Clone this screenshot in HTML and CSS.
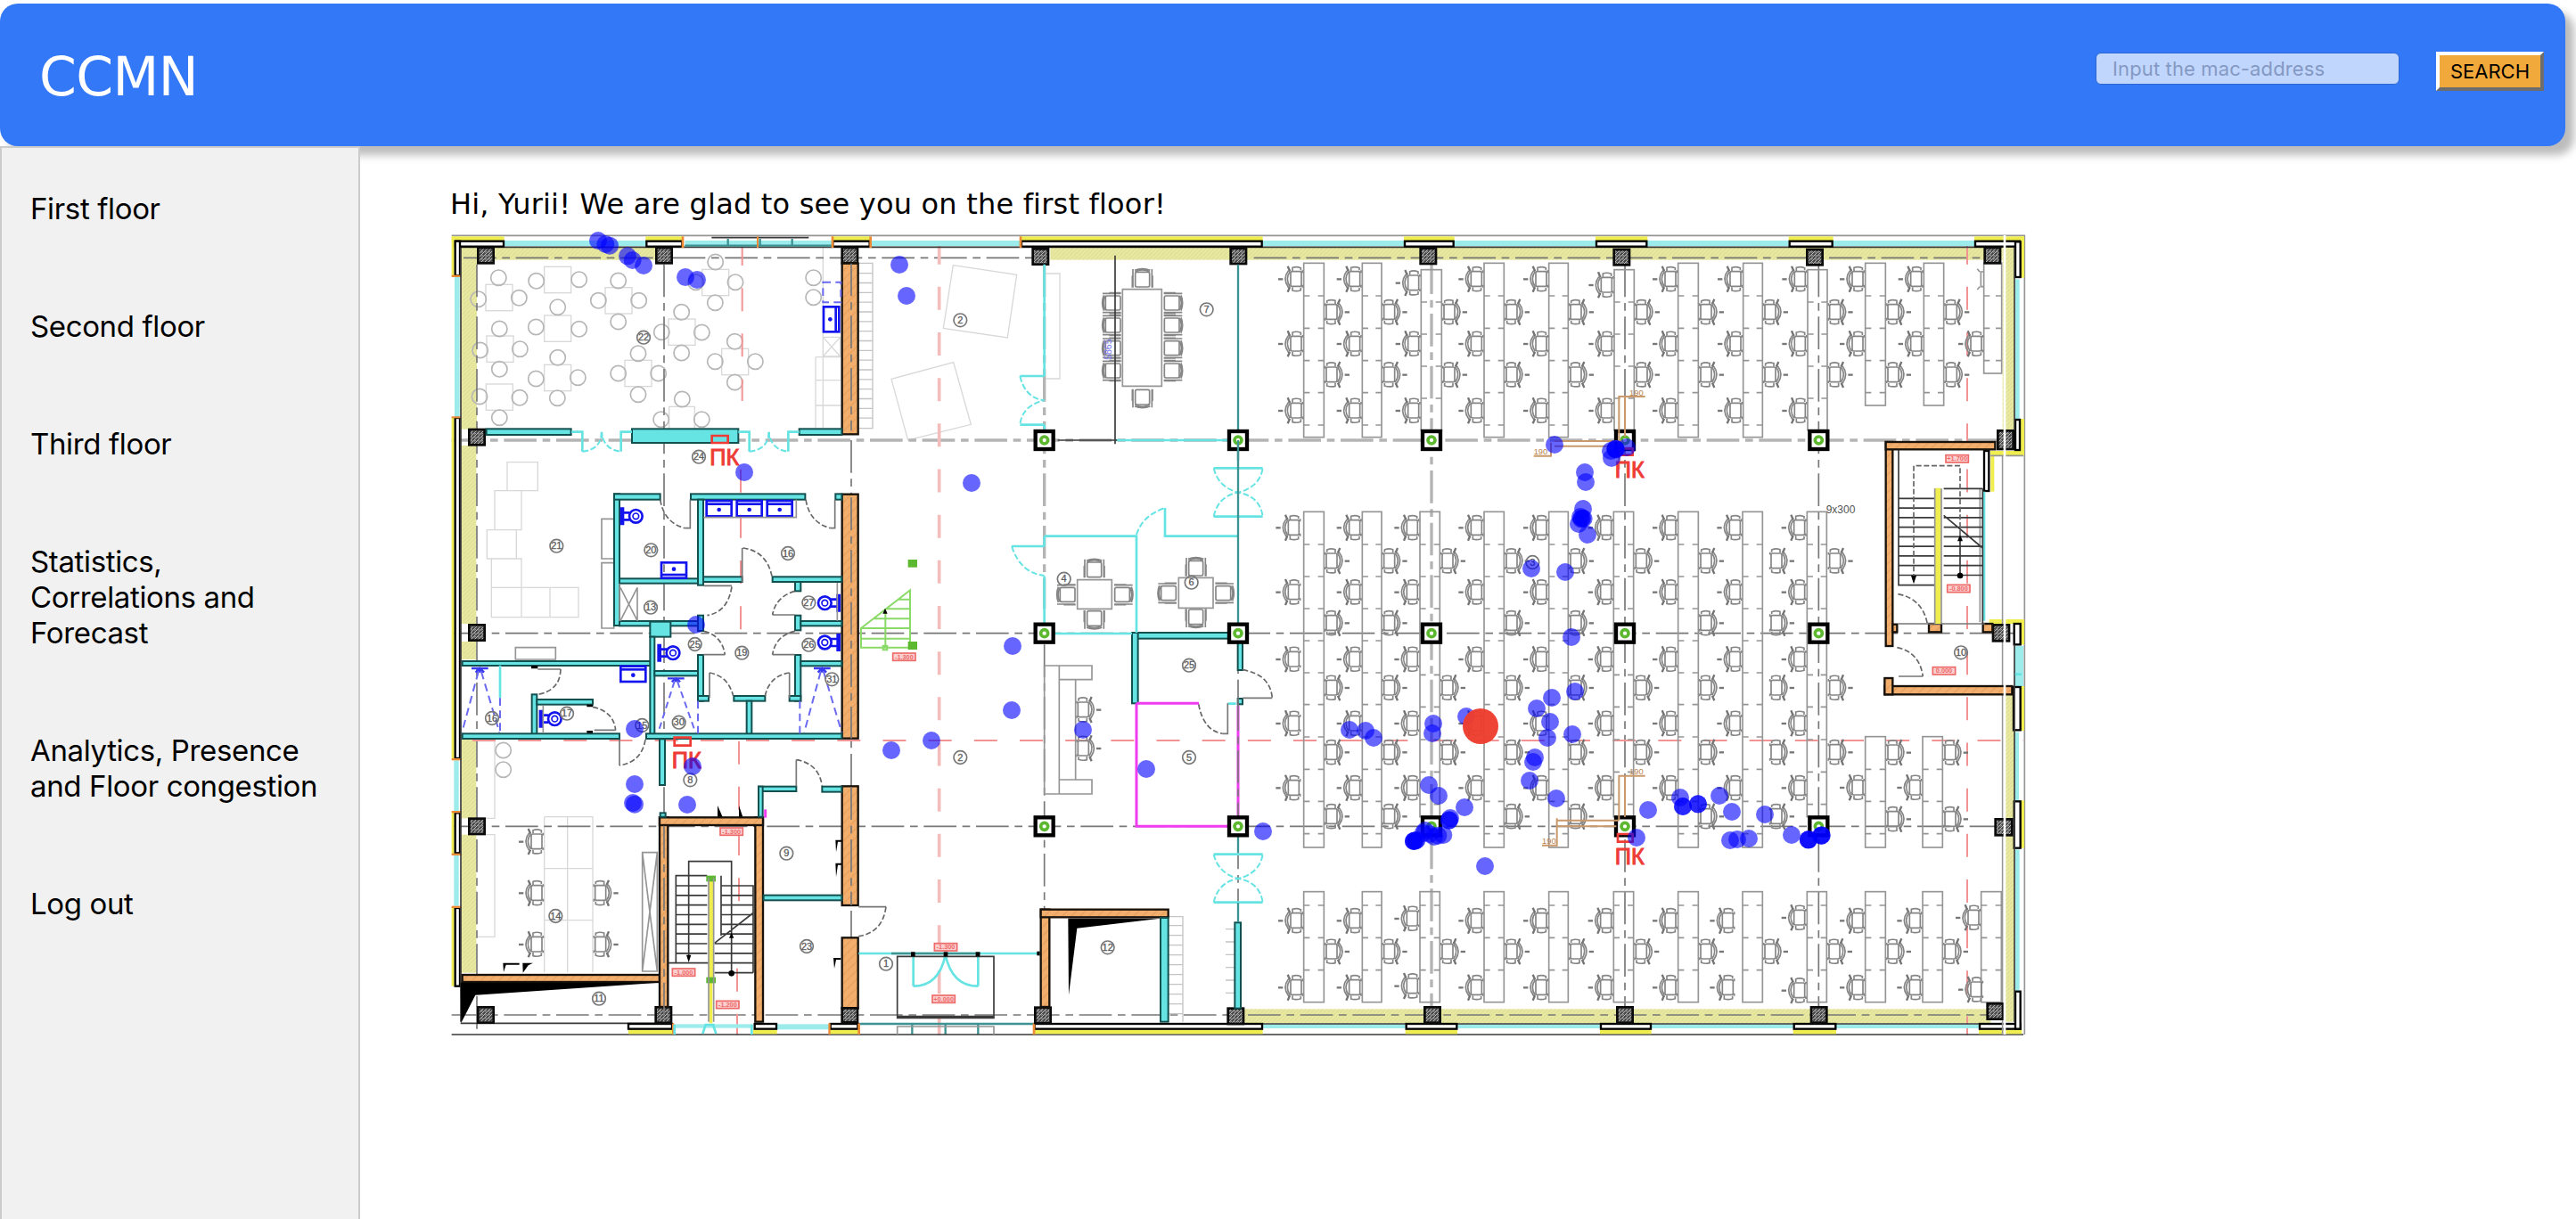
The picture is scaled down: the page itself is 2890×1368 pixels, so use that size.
FILE: index.html
```html
<!DOCTYPE html>
<html lang="en">
<head>
<meta charset="utf-8">
<title>CCMN</title>
<link rel="stylesheet" href="styles.css">
</head>
<body>
<header class="topbar">
  <div class="brand">CCMN</div>
  <form class="search">
    <input class="search-input" type="text" placeholder="Input the mac-address">
    <button class="search-button" type="button">SEARCH</button>
  </form>
</header>
<div class="layout">
  <nav class="sidebar">
    <a class="nav-item">First floor</a>
    <a class="nav-item">Second floor</a>
    <a class="nav-item">Third floor</a>
    <a class="nav-item">Statistics,<br>Correlations and<br>Forecast</a>
    <a class="nav-item">Analytics, Presence<br>and Floor congestion</a>
    <a class="nav-item">Log out</a>
  </nav>
  <main class="content">
    <p class="greeting">Hi, Yurii! We are glad to see you on the first floor!</p>
    <svg class="plan" viewBox="18 42 5298 2694">
      <defs>
        <pattern id="insulation" width="14" height="14" patternUnits="userSpaceOnUse">
          <rect width="14" height="14" fill="#e9e9a6"/>
          <path d="M0 14L14 0" stroke="#dcdc88" stroke-width="3"/>
        </pattern>
        <pattern id="brick" width="30" height="30" patternUnits="userSpaceOnUse">
          <rect width="30" height="30" fill="#f1ae6d"/>
          <path d="M0 30L30 0" stroke="#e8a05f" stroke-width="4"/>
        </pattern>
        <pattern id="concrete" width="12" height="12" patternUnits="userSpaceOnUse">
          <rect width="12" height="12" fill="#4a4a4a"/>
          <path d="M0 12L12 0M0 5L5 0" stroke="#bbb" stroke-width="3"/>
        </pattern>
        <g id="chair" class="chair">
          <rect x="-44" y="-26" width="36" height="50" rx="5"/>
          <path d="M-52 -28Q-72 -2 -52 27L-46 30M-52 -28L-44 -30M-46 -26Q-64 -2 -46 25"/>
          <path d="M-38 -28V-39Q-24 -44 -10 -38V-30M-38 27V38Q-24 42 -10 37V28M-4 -30V-24H-8M-4 28V22H-8"/>
          <path class="arm" d="M-54 -44L-47 -28M-54 43L-47 27"/>
          <path class="knob" d="M-86 0H-70"/>
        </g>
        <g id="seat" class="chair">
          <rect x="-24" y="-22" width="48" height="50" rx="5"/>
          <path d="M-32 30V-32M32 30V-32M-25 -22Q0 -36 25 -22M-26 -28Q0 -38 26 -28M-34 -10V30M34 -10V30"/>
        </g>
        <g id="cafe-table" class="soft">
          <rect x="-45" y="-44" width="90" height="88"/>
        </g>
        <g id="sink" class="fixture">
          <rect x="-42" y="-26" width="84" height="52"/>
          <path d="M-42 -15H42"/>
          <circle class="drain" cy="4" r="7"/>
        </g>
        <g id="toilet" class="fixture">
          <path d="M3 -30V30M9 -30V30M9 -12H32M9 12H32"/>
          <circle cx="52" r="22"/>
          <circle cx="52" r="10" stroke-width="5"/>
        </g>
        <g id="shower" class="shower">
          <path class="head" d="M-28 0H28M-14 14L0 0L14 14M0 0V14"/>
          <path d="M-5 12L-60 215M5 12L66 215"/>
        </g>
      </defs>
      <g id="floor"></g>
      <g id="visitors"></g>
    </svg>
  </main>
</div>
<script src="plan.js"></script>
</body>
</html>
```
FILE: styles.css
```css
* { box-sizing: border-box; }
html, body { height: 100%; }
body {
  margin: 0;
  display: flex;
  flex-direction: column;
  overflow: hidden;
  background: #fff;
  color: #000;
  font-family: "DejaVu Sans", sans-serif;
}
.topbar {
  flex: none;
  display: flex;
  justify-content: space-between;
  height: 160px;
  margin: 4px 12px 0 0;
  padding: 0 24px 0 44px;
  background: #3278f7;
  border-radius: 20px;
  box-shadow: 10px 10px 10px #bcbcbc;
}
.brand {
  color: #fff;
  font-size: 60px;
  line-height: 70px;
  padding-top: 47px;
  letter-spacing: -0.6px;
}
.search { display: flex; align-items: flex-start; gap: 41px; padding-top: 54px; }
.search-input {
  width: 341px;
  height: 36px;
  margin-top: 1px;
  padding: 0 18px;
  border: 1px solid #2b66d2;
  border-radius: 6px;
  background: #c1d6fd;
  font: 22px/30px Inter, sans-serif;
  letter-spacing: 0.13px;
}
.search-input::placeholder { color: #8499c3; opacity: 1; }
.search-button {
  width: 121px;
  height: 44px;
  padding: 0;
  border: 4px solid;
  border-color: #fff #6d6d6d #6d6d6d #fff;
  background: #f2a93b;
  color: #000;
  font: 22px/34px Inter, sans-serif;
}
.layout { flex: 1; display: flex; min-height: 0; }
.sidebar {
  position: relative;
  flex: none;
  display: flex;
  flex-direction: column;
  gap: 92px;
  width: 404px;
  padding: 48px 0 0 32px;
  background: #f1f1f1;
  border: 2px solid #ccc;
  border-bottom: 0;
}
.nav-item { font: 33px/40px Inter, sans-serif; letter-spacing: -0.36px; }
.content { padding: 42px 0 0 102px; }
.greeting {
  margin: 0 0 0 -1px;
  height: 58px;
  font-size: 32px;
  line-height: 46px;
  letter-spacing: 0.2px;
  white-space: nowrap;
}
.plan { display: block; width: 1766px; height: 898px; overflow: visible; }

.plan .chair, .plan .chair path, .plan .chair rect { fill: none; stroke: #858585; stroke-width: 5; }
.plan .chair .arm { stroke: #747474; stroke-width: 7; }
.plan .chair .knob { stroke: #777; stroke-width: 7; }
.plan .desk { fill: none; stroke: #959595; stroke-width: 5; }
.plan .soft { fill: none; stroke: #d8d8d8; stroke-width: 4; }
.plan .rungs { fill: none; stroke: #c4c4c4; stroke-width: 4; }
.plan .stool { fill: none; stroke: #b6b6b6; stroke-width: 5; }
.plan .gray { fill: none; stroke: #959595; stroke-width: 5; }
.plan .dark { fill: none; stroke: #3a3a3a; stroke-width: 5; }
.plan .solid { fill: #000; stroke: none; }
.plan .door { fill: none; stroke: #666; stroke-width: 5; stroke-dasharray: 18 8; }
.plan .leaf { fill: none; stroke: #777; stroke-width: 5; }
.plan .axis { fill: none; stroke: #777; stroke-width: 5; stroke-dasharray: 110 20 26 20; }
.plan .axis.wide { stroke: #b4b4b4; stroke-width: 10; }
.plan .beam { fill: none; stroke: #f29494; stroke-width: 6; stroke-dasharray: 78 75.5; }
.plan .beam.wide { stroke: #f5bcbc; stroke-width: 11; }
.plan .cyan { fill: none; stroke: #66e3e3; stroke-width: 8; }
.plan .cyan.dash { stroke-width: 6; stroke-dasharray: 20 8; }
.plan .glass { fill: #9cecec; }
.plan .teal { fill: none; stroke: #3d9292; stroke-width: 7; }
.plan .partition { fill: #66e4e4; stroke: #12504f; stroke-width: 6; }
.plan .brick { fill: url(#brick); stroke: #17110a; stroke-width: 7; }
.plan .insulation { fill: url(#insulation); }
.plan .concrete { fill: url(#concrete); stroke: #0a0a0a; stroke-width: 8; }
.plan .yellow { fill: #f0ee4e; }
.plan .shell { fill: #fff; stroke: #000; stroke-width: 7; }
.plan .cap { fill: #ec8a35; }
.plan .column { fill: #fff; stroke: #000; stroke-width: 13; }
.plan .core { fill: none; stroke: #5bb82f; stroke-width: 11; }
.plan .fixture, .plan .fixture path { fill: none; stroke: #1414ee; stroke-width: 8; }
.plan .drain { fill: #1414ee; stroke: none; }
.plan .shower { fill: none; stroke: #6a6af0; stroke-width: 6; stroke-dasharray: 26 16; }
.plan .shower .head { stroke-dasharray: none; stroke: #3a3af0; stroke-width: 8; }
.plan .magenta { fill: none; stroke: #f03cf0; stroke-width: 9; }
.plan .green { fill: none; stroke: #8ada68; stroke-width: 6; }
.plan .green-fill { fill: #5bb82f; }
.plan .copper { fill: none; stroke: #c9996b; stroke-width: 6; }
.plan .red { fill: none; stroke: #ee3b35; stroke-width: 8; }
.plan .room circle { fill: none; stroke: #777; stroke-width: 5; }
.plan .room text { font: 33px "Liberation Sans", sans-serif; fill: #444; stroke: #777; stroke-width: 1; text-anchor: middle; }
.plan .pk { font: 76px "Liberation Sans", sans-serif; fill: #ee3b35; stroke: #ee3b35; stroke-width: 3; text-anchor: middle; }
.plan .level rect { fill: #fbd0d0; stroke: #ee6a68; stroke-width: 5; }
.plan .level text { font: bold 22px "Liberation Sans", sans-serif; fill: #ee6a68; text-anchor: middle; }
.plan .size { font: 28px "Liberation Sans", sans-serif; fill: #b98450; }
.plan .note { font: 36px "Liberation Sans", sans-serif; fill: #555; }
.plan .blue-note { font: 32px "Liberation Sans", sans-serif; fill: #7777ee; }
.plan .visitor { fill: rgba(0, 0, 255, 0.6); }
.plan .target { fill: rgba(237, 62, 48, 0.97); }
```
FILE: plan.js
```js
// Draws the first floor; three plan units make one pixel.
const out = [];
const rect = (cls, ...list) => list.forEach(([x1, y1, x2, y2]) =>
  out.push(`<rect class="${cls}" x="${x1}" y="${y1}" width="${x2 - x1}" height="${y2 - y1}"/>`));
const path = (cls, d) => out.push(`<path class="${cls}" d="${d}"/>`);
const circle = (cls, r, ...list) => list.forEach(([x, y]) =>
  out.push(`<circle class="${cls}" cx="${x}" cy="${y}" r="${r}"/>`));
const use = (id, x, y, extra = '') =>
  out.push(`<use href="#${id}" transform="translate(${x} ${y}) ${extra}"/>`);
const text = (cls, x, y, s, extra = '') => out.push(`<text class="${cls}" x="${x}" y="${y}" ${extra}>${s}</text>`);

// insulation
rect('insulation', [52, 83, 705, 125], [2035, 83, 5240, 125], [52, 83, 105, 695], [52, 750, 103, 1350],
  [52, 1410, 103, 1470], [52, 1740, 103, 2005], [52, 2060, 103, 2525], [5240, 83, 5280, 700],
  [5250, 1590, 5280, 2005], [5250, 2065, 5280, 2690], [2685, 2647, 5200, 2695]);

// soft furniture in the lounge
const tables = [[180, 252], [377, 192], [582, 262], [183, 425], [377, 356], [181, 587], [377, 522], [648, 507],
  [795, 368], [908, 201], [974, 468]];
tables.forEach(([x, y]) => use('cafe-table', x, y));
path('soft', 'M752 700V619H838V700M1270 83V690M1245 452H1330M1245 452V690M1245 530H1330M1245 615H1330M1270 385H1328V450H1270ZM1270 385L1328 450M1328 385L1270 450');
path('soft', 'M207 806H310V902H207ZM165 902H255V1034H165ZM139 1034H238V1131H139ZM154 1131H255V1328H154ZM154 1228H447V1328H255M351 1228V1328');
path('soft', 'M332 2000H495V2524M332 2000V2524M410 2000V2524M332 2174H495M332 2348H495M105 1745H165V2005H105M105 2060H165V2404H105');
path('soft', 'M1708 143L1922 175L1891 387L1675 355ZM1500 526L1709 470L1768 679L1556 732ZM2020 171H2067V525H2020');
path('gray', 'M525 997H566V1131H525ZM525 1365V1145H566V1365ZM235 1430H370V1470H235ZM662 2120H712V2520H662ZM662 2120L712 2520M712 2120L662 2520');
circle('stool', 26, [178, 185], [110, 257], [247, 253], [305, 196], [449, 191], [581, 195], [514, 262], [650, 262],
  [581, 333], [181, 357], [116, 429], [250, 425], [181, 493], [377, 284], [304, 351], [449, 358], [377, 454],
  [304, 525], [445, 521], [376, 590], [114, 585], [249, 589], [181, 656], [648, 440], [581, 507], [716, 507],
  [648, 578], [794, 301], [727, 368], [862, 369], [794, 438], [796, 594], [725, 662], [862, 662], [908, 132],
  [842, 200], [975, 200], [907, 269], [973, 400], [907, 467], [1042, 467], [973, 537], [1238, 185], [1238, 251],
  [194, 1776], [194, 1841]);

// grid axes
path('axis wide', 'M20 732H5300M2015 140V1300M3318 130V2640');
path('axis', 'M25 1382H5290M25 2032H5290M20 2667H2680M60 118H1980M2720 118H5200M2700 2667H5190');
path('axis', 'M105 140V2730M735 140V2690M1365 732V2640M2015 1420V2310M2667 130V2730M3969 140V2640M4621 140V2700');
path('beam', 'M998 66V600M993 830V1400M987 1745V2300M981 2510V2735M5121 62V2735M90 1743H5310');
path('beam wide', 'M1661 62V2735');

// desks: x1, x2, top, bottom, divider heights
const desk = (x1, x2, y1, y2, ticks) => {
  rect('desk', [x1, y1, x2, y2]);
  path('desk', ticks.map(t => `M${x1} ${t}h20M${x2} ${t}h-20`).join(''));
};
const topTicks = [246, 355, 464, 572, 681], axisTicks = [267, 375, 483, 591];
[[2888, 2956], [3085, 3150], [3495, 3562], [3713, 3778], [4148, 4216], [4367, 4432]].forEach(([a, b]) => desk(a, b, 136, 722, topTicks));
[[3283, 3352], [3933, 4000], [4584, 4650]].forEach(([a, b]) => desk(a, b, 158, 698, axisTicks));
[[4778, 4846], [4975, 5042]].forEach(([a, b]) => desk(a, b, 136, 615, topTicks.slice(0, 4)));
desk(5177, 5237, 136, 507, topTicks.slice(0, 3));
const midTicks = [1083, 1191, 1299, 1407, 1515, 1622, 1731, 1840, 1948, 2057];
[[2888, 2956], [3085, 3150], [3495, 3562], [3713, 3778], [4148, 4216], [4365, 4432]].forEach(([a, b]) => desk(a, b, 973, 2103, midTicks));
[[3279, 3346], [3931, 3998], [4582, 4648]].forEach(([a, b]) => desk(a, b, 973, 2000, [1083, 1191, 1299, 1522, 1630, 1740, 1849, 1958]));
[[4778, 4846], [4971, 5038]].forEach(([a, b]) => desk(a, b, 1730, 2103, [1840, 1948, 2057]));
[[2888, 2956], [3085, 3150], [3279, 3346], [3495, 3562], [3713, 3778], [3931, 3998], [4148, 4216], [4365, 4432],
  [4582, 4648], [4778, 4846], [4971, 5038], [5168, 5236]].forEach(([a, b]) => desk(a, b, 2252, 2624, [2298, 2407, 2516]));

// chairs on either side of the desks
const left = (x, ...ys) => ys.forEach(y => use('chair', x, y));
const right = (x, ...ys) => ys.forEach(y => use('chair', x, y, 'scale(-1 1)'));
[2888, 3085, 3495, 3713, 4148, 4367, 4584].forEach(x => left(x, 190, 408, 633));
left(3283, 203, 408, 633); left(3933, 210, 408, 633);
left(4778, 190, 408); left(4975, 190, 408); left(5177, 408);
path('gray', 'M5155 155l8 10M5177 165h-10V215h10M5155 225l8-10');
[2956, 3150, 3352, 3562, 3778, 4000, 4216, 4432, 4650, 4846, 5042].forEach(x => right(x, 301, 512));
[2880, 3085, 3279, 3495, 3713, 3931, 4148, 4365, 4582].forEach(x => left(x, 1027, 1244, 1470, 1686, 1903));
[2956, 3150, 3562, 3778, 4216, 4453].forEach(x => right(x, 1139, 1348, 1566, 1783, 1999));
[3346, 3998, 4650].forEach(x => right(x, 1139, 1566, 1783));
left(4778, 1902); left(4971, 1902); right(4846, 1784, 2008); right(5038, 1784, 2008);
[2888, 3085, 3495, 3713, 3931, 4148, 4341, 4778, 4971].forEach(x => left(x, 2350, 2575));
left(3279, 2343, 2570); left(4582, 2340, 2585); left(5168, 2340); left(5177, 2582);
[2956, 3150, 3346, 3562, 3778, 3998, 4216, 4432, 4648, 4846, 5038].forEach(x => right(x, 2454));
left(332, 2084, 2257, 2430); right(495, 2257, 2430);
right(2120, 1640, 1770);

// meeting rooms
path('gray', 'M2278 224H2410V550H2278ZM2126 1202H2242V1300H2126ZM2467 1195H2583V1297H2467Z');
[270, 345, 422, 498].forEach(y => { use('seat', 2243, y, 'rotate(-90)'); use('seat', 2447, y, 'rotate(90)'); });
use('seat', 2345, 188, ''); use('seat', 2345, 590, 'scale(1 -1)');
use('seat', 2183, 1165); use('seat', 2183, 1335, 'scale(1 -1)'); use('seat', 2090, 1252, 'rotate(-90)'); use('seat', 2280, 1252, 'rotate(90)');
use('seat', 2525, 1160); use('seat', 2525, 1330, 'scale(1 -1)'); use('seat', 2430, 1247, 'rotate(-90)'); use('seat', 2620, 1247, 'rotate(90)');
path('gray', 'M2015 1491H2175V1538H2065M2065 1491V1923M2015 1491V1923H2175V1875H2065M2120 1538V1875');

// ladders
let rungs = 'M1390 136H1437V692H1390';
for (let y = 170; y < 680; y += 32.5) rungs += `M1390 ${y}H1437`;
rungs += 'M2433 2336H2481V2690';
for (let y = 2366; y < 2690; y += 33) rungs += `M2433 ${y}H2481`;
for (let y = 2378; y < 2630; y += 43) rungs += `M2625 ${y}H2655`;
path('rungs', rungs);

// facade: top
path('gray', 'M20 43H5314V2733');
rect('glass', [197, 60, 673, 79], [805, 60, 1300, 79], [1430, 60, 1934, 79], [2750, 60, 3225, 79], [3395, 60, 3870, 79],
  [4045, 60, 4520, 79], [4670, 60, 5145, 79]);
path('dark', 'M50 82H5240M895 50H1222');
path('teal', 'M805 77H1300M950 54v20M1058 54v20M1166 54v20');
rect('yellow', [20, 46, 197, 60], [673, 46, 800, 60], [1300, 46, 1430, 60], [1934, 46, 2750, 60], [3225, 46, 3395, 60],
  [3870, 46, 4045, 60], [4520, 46, 4670, 60], [5145, 46, 5313, 60]);
rect('shell', [32, 62, 195, 80], [676, 62, 796, 80], [1303, 62, 1427, 80], [1938, 62, 2747, 80], [3228, 62, 3392, 80],
  [3873, 62, 4042, 80], [4523, 62, 4667, 80], [5148, 62, 5300, 80]);
rect('cap', [794, 46, 802, 84], [1298, 46, 1306, 84], [1426, 46, 1434, 84], [1931, 46, 1939, 84], [1047, 46, 1053, 84]);

// facade: left
rect('glass', [30, 180, 47, 655], [28, 1810, 44, 1980], [28, 2130, 44, 2300]);
rect('yellow', [20, 46, 29, 180], [20, 655, 29, 1805], [20, 1985, 29, 2125], [20, 2305, 29, 2570]);
rect('shell', [32, 62, 48, 178], [32, 657, 48, 1803], [32, 1987, 48, 2122], [32, 2307, 48, 2570]);
rect('cap', [20, 176, 50, 183], [20, 652, 50, 658], [20, 1803, 54, 1810], [20, 1980, 54, 1987], [20, 2123, 54, 2130], [20, 2300, 54, 2307]);
path('dark', 'M51 83V2690');

// facade: bottom
rect('glass', [770, 2698, 1035, 2711], [1115, 2698, 1290, 2716], [2750, 2698, 3230, 2712], [3405, 2698, 3885, 2712], [4058, 2698, 4535, 2712], [4680, 2698, 5160, 2712]);
path('teal', 'M1390 2697H1980M1570 2700V2733M1792 2700V2733M1682 2700V2733');
path('dark', 'M20 2733H5310M50 2695H720M2750 2697H5160');
path('gray', 'M1520 2733V2706H1845V2733');
rect('yellow', [615, 2716, 765, 2731], [1035, 2716, 1115, 2731], [1292, 2716, 1390, 2731], [1980, 2716, 2750, 2731],
  [3230, 2716, 3405, 2731], [3885, 2716, 4058, 2731], [4535, 2716, 4680, 2731], [5160, 2716, 5305, 2731]);
rect('shell', [615, 2697, 762, 2714], [1040, 2697, 1113, 2714], [1295, 2697, 1387, 2714], [1982, 2697, 2748, 2714], [3233, 2697, 3403, 2714],
  [3888, 2697, 4056, 2714], [4538, 2697, 4678, 2714], [5163, 2697, 5300, 2714]);
rect('cap', [762, 2695, 769, 2733], [1288, 2695, 1295, 2733], [1387, 2695, 1395, 2733], [1976, 2695, 1984, 2733]);

// facade: right
rect('glass', [5283, 190, 5297, 660], [5280, 1425, 5310, 1560], [5280, 1715, 5295, 1945], [5283, 2110, 5297, 2585]);
rect('yellow', [5301, 46, 5313, 185], [5301, 660, 5313, 780], [5200, 768, 5313, 783], [5200, 768, 5212, 905], [5195, 1335, 5313, 1350],
  [5301, 1350, 5313, 1420], [5301, 1560, 5313, 1710], [5301, 1945, 5313, 2105]);
rect('shell', [5283, 64, 5300, 183], [5283, 663, 5298, 765], [5178, 768, 5194, 903], [5279, 1350, 5300, 1420], [5277, 1563, 5300, 1708],
  [5279, 1948, 5300, 2105], [5283, 2588, 5300, 2714]);
path('dark', 'M5280 83V700M5280 1420V2690');
path('cyan', 'M5178 905V1340');
path('gray', 'M5164 895V1345M5200 784H5310M5240 784V2733');

// wall columns
[[135, 110], [735, 110], [1360, 110], [2002, 114], [2668, 112], [3307, 112], [3958, 116], [4608, 116], [5206, 110],
  [105, 722], [105, 1380], [105, 2032], [135, 2667], [733, 2667], [2010, 2668], [2659, 2671], [3321, 2667],
  [3969, 2667], [4622, 2667], [5215, 2655]].forEach(([x, y]) => rect('concrete', [x - 26, y - 26, x + 26, y + 26]));
rect('concrete', [5224, 700, 5276, 762], [5208, 1354, 5262, 1408], [5216, 2008, 5272, 2062]);

// brick walls
rect('brick', [1334, 137, 1388, 712], [1334, 914, 1388, 1736], [1334, 1897, 1388, 2298], [1334, 2407, 1388, 2645],
  [56, 2532, 720, 2556], [720, 2002, 748, 2640], [1042, 2002, 1068, 2690], [720, 2002, 1068, 2028],
  [2003, 2312, 2032, 2640], [2003, 2312, 2432, 2338], [4847, 738, 4870, 1425], [4847, 738, 5215, 763],
  [4843, 1560, 5272, 1588], [4843, 1533, 4870, 1588], [4870, 1352, 4885, 1378], [4992, 1350, 5034, 1378], [5174, 1350, 5206, 1378]);
rect('concrete', [1334, 2644, 1386, 2692]);
path('axis', 'M1365 137V700M1365 925V1736M1365 1900V2298M735 2030V2690');
path('solid', 'M50 2558H720L100 2600L52 2694ZM2095 2342H2405L2125 2375L2097 2600Z');
path('solid', 'M915 1962L932 2000H915ZM987 1962L1000 2000H987ZM193 2492h55v6h-45l-8 25zM259 2492h35l-16 8-18 25zM1312 2078h20v6h-12l-6 35zM1312 2156h20v6h-12l-6 40zM1305 2475h25v6h-16l-6 30z');

// partitions
rect('partition', [137, 694, 422, 714], [627, 694, 985, 741], [1190, 694, 1333, 714],
  [567, 913, 585, 1356], [567, 913, 722, 932], [825, 913, 1210, 932], [1312, 913, 1333, 932], [849, 932, 867, 1220],
  [585, 1198, 849, 1214], [867, 1192, 998, 1209], [1100, 1192, 1333, 1209], [1176, 1209, 1195, 1240],
  [585, 1341, 867, 1357], [849, 1322, 867, 1374], [688, 1343, 757, 1394], [1176, 1322, 1195, 1372], [1195, 1341, 1333, 1357],
  [56, 1476, 700, 1491], [688, 1394, 703, 1725], [849, 1455, 867, 1610], [703, 1509, 849, 1525], [1176, 1455, 1195, 1610],
  [1195, 1476, 1333, 1492], [849, 1593, 885, 1610], [970, 1593, 1075, 1610], [1157, 1593, 1195, 1610], [1013, 1610, 1030, 1722],
  [290, 1588, 307, 1722], [307, 1605, 495, 1622], [56, 1720, 585, 1737], [675, 1720, 1333, 1737], [720, 1738, 738, 1893],
  [1053, 1898, 1180, 1914], [1053, 1898, 1067, 2000], [1267, 1898, 1333, 1916], [1070, 2264, 1333, 2281], [722, 1987, 740, 2000],
  [2310, 1380, 2635, 1400], [2310, 1380, 2330, 1618], [2666, 1410, 2682, 1506], [2666, 1602, 2682, 1621],
  [2656, 2356, 2676, 2645], [2406, 2340, 2432, 2690]);
path('solid', 'M288 1491h22v10h-22zM475 1622h20v8h-20zM475 1710h20v8h-20z');
path('cyan', 'M183 1490V1600M2015 140V515M1933 516H2015M1933 680H2015M2015 680V720M2250 732H2640M2015 1055H2325V1380M2421 960V1055H2667M1905 1089H2015M2015 1055V1089M2015 1190V1350M2050 1383H2310M2632 1619H2660M1390 2460H2000M2585 826H2750M2585 989H2750M2585 2126H2750M2585 2288H2750M1574 2465V2570M1792 2465V2570');
path('cyan dash', 'M1933 516Q1950 590 2015 598Q1940 615 1933 680M2325 1050Q2345 985 2421 960M1905 1089Q1935 1180 2015 1188M2585 826Q2600 890 2667 908Q2740 890 2750 826M2585 989Q2600 920 2667 908Q2740 920 2750 989M2585 2126Q2600 2190 2667 2208Q2740 2190 2750 2126M2585 2288Q2600 2220 2667 2208Q2740 2220 2750 2288');
path('cyan', 'M423 704H460V770M627 704H590V770M525 704V725M985 704H1022V770M1190 704H1153V770M1088 704V725');
path('cyan dash', 'M460 770Q520 765 525 710Q535 765 590 770M1022 770Q1082 765 1088 710Q1098 765 1153 770');
path('cyan', 'M1574 2570Q1660 2570 1682 2465Q1705 2570 1792 2570M865 2730l10-30h30M900 2700l10 30M770 2700V2733M1030 2700V2733M5282 1520h22');
path('teal', 'M2667 140V700M2667 760V1350M2667 2050V2120M2667 2290V2355M1500 2460H1800');

// doors
path('leaf', 'M823 932V1028H805M1310 932V1028H1295M998 1210V1095M868 1222H963M1100 1320H1175M868 1454H940M1100 1454H1175M888 1600V1515M1157 1600V1515M310 1503H387M500 1708H572M585 1740V1827M1180 1897V1808M1390 2303H1482M2632 1618V1720H2615M2682 1600H2782M4890 1527H4972M4888 1350H5180');
path('door', 'M722 932Q735 1010 805 1028M1212 932Q1225 1010 1295 1028M1000 1095Q1080 1105 1098 1190M963 1225Q950 1310 880 1322M1175 1240Q1110 1260 1100 1320M870 1375Q930 1390 940 1454M1175 1375Q1110 1390 1100 1454M888 1515Q950 1525 968 1593M1157 1515Q1090 1525 1075 1593M387 1503Q385 1575 310 1588M495 1630Q565 1645 572 1708M672 1740Q660 1815 585 1827M1180 1808Q1255 1820 1267 1895M1482 2303Q1470 2390 1390 2402M2534 1620Q2550 1710 2615 1720M2682 1505Q2775 1520 2782 1600M4885 1430Q4960 1445 4972 1527M4888 1250Q4970 1265 4987 1350');

// plumbing
use('sink', 920, 962); use('sink', 1022, 962); use('sink', 1124, 962); use('sink', 768, 1170, 'scale(1 -1)'); use('sink', 631, 1519);
use('sink', 1298, 325, 'rotate(90)');
use('toilet', 588, 988); use('toilet', 713, 1448); use('toilet', 315, 1670);
use('toilet', 1328, 1280, 'scale(-1 1)'); use('toilet', 1328, 1413, 'scale(-1 1)');
use('shower', 115, 1500); use('shower', 775, 1534, 'scale(1 .85)'); use('shower', 1267, 1500);
path('shower', 'M183 1600V1720M849 1610V1720M1192 1610V1720M1270 200H1330V268H1270Z');
path('gray', 'M868 992H1180V932M585 1215V1340M645 1228V1340M588 1228L645 1340M645 1228L588 1340M328 1625V1718M1318 1212V1340');

// green stair and magenta room
path('green', 'M1398 1365L1563 1237V1430H1398ZM1520 1268H1563M1480 1300H1563M1440 1333H1563M1400 1365H1563M1398 1400H1563M1480 1430V1310M1472 1424h14v14h-14z');
rect('green-fill', [1556, 1134, 1587, 1160], [1556, 1410, 1587, 1437]);
path('solid', 'M1479 1298l-8 18h16z');
path('magenta', 'M2325 1618H2535M2325 1618V2032H2640M2667 1625V2000');
path('axis', 'M2667 1600V2000');
path('magenta', 'M1076 1975V2003');

// stairs
let steps = 'M775 2492V2198H880M927 2198V2400M1035 2230V2525M750 2492H1035M905 2525H1035M818 2470V2150H962V2520M905 2425L1037 2322';
for (let y = 2232; y < 2480; y += 32.5) steps += `M775 ${y}H880M${y > 2400 ? 905 : 927} ${y}H1035`;
for (let y = 928; y < 1200; y += 32.3) steps += `M4890 ${y}H5020M5042 ${y}H5173`;
steps += 'M4890 765V1220H5020M5042 895H5173M5173 895V1350M5097 1190V1060M5042 985L5173 1095';
path('dark', steps);
path('door', 'M4941 1200V818H5097V1060');
path('solid', 'M810 2465h16l-8 25zM954 2408l8-18 8 18zM4932 1188h18l-9 28zM5088 1072l9-22 9 22z');
circle('solid', 10, [962, 2527], [5097, 1188]);
rect('yellow', [885, 2205, 902, 2550], [887, 2550, 898, 2695], [5012, 893, 5032, 1350]);
rect('green-fill', [877, 2198, 909, 2218], [877, 2540, 909, 2560]);
path('gray', 'M885 2205V2690M902 2205V2690M5012 895V1350M5034 895V1350');

// lobby
path('dark', 'M1520 2470H1845V2677H1520ZM1520 2672H1845');
rect('solid', [1566, 2455, 1580, 2470], [1676, 2455, 1690, 2470], [1784, 2455, 1798, 2470], [1990, 2453, 2000, 2467]);
path('dark', 'M2253 110V745M2060 732H2260');

// structural columns
[2015, 2667, 3318, 3969, 4621].forEach(x => [732, 1382, 2032].forEach(y => {
  rect('column', [x - 30, y - 30, x + 30, y + 30]);
  circle('core', 12, [x, y]);
}));
path('teal', 'M2667 732V800');

// dimensions
path('copper', 'M3732 735H3960M3732 752H3940M3949 830V585H4037M3969 720V585M3662 785H3720V740M3949 2010V1862H4037M3969 2000V1862M3740 2012H3950M3740 2032H3940M3740 2005V2096H3690');
text('size', 3984, 582, '190'); text('size', 3662, 780, '190'); text('size', 3984, 1857, '190'); text('size', 3690, 2091, '190');
text('note', 4646, 979, '9x300');
text('blue-note', 0, 0, '5865', 'transform="translate(2240 462) rotate(-90)"');

// hydrants
path('red', 'M896 717H950V741H896ZM770 1733H824V1760H770ZM3945 2058H3995V2084H3945ZM3945 760H3995V782H3945Z');
text('pk', 938, 817, 'ПК'); text('pk', 811, 1836, 'ПК'); text('pk', 3985, 858, 'ПК'); text('pk', 3985, 2160, 'ПК');

// level marks
[[962, 2049, '-1.300'], [801, 2523, '-1.000'], [949, 2632, '-1.200'], [1543, 1461, '-1.300'], [1683, 2438, '-1.300'], [1676, 2613, '+0.000'],
  [5087, 794, '+1.700'], [5092, 1231, '-0.800'], [5043, 1508, '0.000']].forEach(([x, y, s]) =>
  out.push(`<g class="level"><rect x="${x - 38}" y="${y - 12}" width="76" height="25"/><text x="${x}" y="${y + 8}">${s}</text></g>`));

// room numbers
[[666, 386, 22], [852, 788, 24], [373, 1088, 21], [691, 1102, 20], [1152, 1113, 16], [690, 1295, 13], [1222, 1279, 27], [839, 1419, 25],
  [1222, 1421, 26], [997, 1448, 19], [1300, 1537, 31], [785, 1682, 30], [156, 1668, 16], [408, 1652, 17], [661, 1692, 15],
  [823, 1876, 8], [1147, 2123, 9], [1215, 2436, 23], [370, 2334, 14], [516, 2612, 11], [1482, 2495, 1], [1732, 328, 2],
  [2561, 292, 7], [2081, 1199, 4], [2510, 1211, 6], [2502, 1490, 25], [2502, 1800, 5], [1732, 1800, 2], [2228, 2440, 12],
  [3658, 1143, 3], [5100, 1447, 10]].forEach(([x, y, n]) =>
  out.push(`<g class="room"><circle cx="${x}" cy="${y}" r="22"/><text x="${x}" y="${y + 11}">${n}</text></g>`));

// seam between the two sheets of the plan
out.push('<rect x="5243" y="42" width="8" height="2691" fill="#fff"/>');
document.getElementById('floor').innerHTML = out.join('');

// connected devices
const devices = [[513, 60], [538, 72], [552, 77], [612, 112], [629, 126], [666, 144], [807, 183], [846, 192], [1005, 840],
  [843, 1353], [636, 1704], [831, 1830], [636, 1890], [630, 1953], [636, 1958], [813, 1959], [1527, 141], [1551, 246],
  [1770, 876], [1908, 1425], [1905, 1641], [1635, 1743], [1500, 1776], [2145, 1707], [2358, 1839], [3732, 747],
  [3921, 768], [3924, 792], [3937, 762], [3939, 763], [3937, 761], [3975, 756], [3834, 840], [3837, 873], [3828, 963], [3819, 990],
  [3830, 996], [3822, 997], [3825, 995], [3813, 1014], [3843, 1050], [3654, 1164], [3768, 1176], [3789, 1395], [3801, 1578],
  [3723, 1599], [3672, 1635], [3717, 1680], [3792, 1722], [3708, 1734], [3666, 1800], [3660, 1815], [3648, 1878],
  [3738, 1938], [3435, 1662], [3324, 1686], [3321, 1719], [3042, 1707], [3096, 1710], [3123, 1734], [3309, 1893],
  [3342, 1929], [3429, 1968], [3381, 2004], [3378, 2011], [3377, 2012], [3297, 2046], [3290, 2055], [3358, 2061], [3340, 2063],
  [3327, 2067], [3312, 2058], [3265, 2080], [3268, 2078], [3258, 2082], [3258, 2082], [3259, 2081], [2751, 2049], [3498, 2166],
  [4047, 1977], [4008, 2070], [4155, 1935], [4164, 1965], [4164, 1965], [4215, 1957], [4215, 1957], [4287, 1929],
  [4329, 1983], [4440, 1992], [4323, 2079], [4347, 2076], [4386, 2073], [4530, 2061], [4586, 2077], [4587, 2077],
  [4587, 2077], [4629, 2063], [4631, 2063], [4631, 2062]];
document.getElementById('visitors').innerHTML =
  devices.map(([x, y]) => `<circle class="visitor" cx="${x}" cy="${y}" r="30"/>`).join('') +
  '<circle class="target" cx="3483" cy="1695" r="60"/>';
```
